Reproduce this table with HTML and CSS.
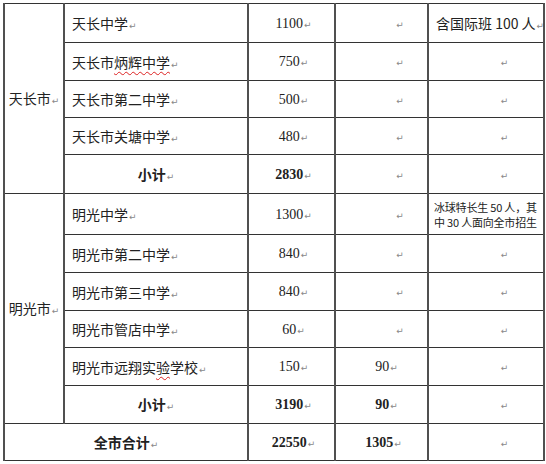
FILE: index.html
```html
<!DOCTYPE html>
<html lang="zh">
<head>
<meta charset="utf-8">
<link rel="stylesheet" href="styles.css">
</head>
<body>
<table class="grid">
  <colgroup>
    <col class="c1"><col class="c2"><col class="c3"><col class="c4"><col class="c5">
  </colgroup>
  <tr class="h39">
    <td class="city" rowspan="5">天长市<i class="pm">↵</i></td>
    <td class="name">天长中学<i class="pm">↵</i></td>
    <td class="num">1100<i class="pm">↵</i></td>
    <td class="empty"><i class="pm">↵</i></td>
    <td class="note">含国际班 100 人<i class="pm">↵</i></td>
  </tr>
  <tr class="h38">
    <td class="name">天长市<span class="spell">炳辉中学</span><i class="pm">↵</i></td>
    <td class="num">750<i class="pm">↵</i></td>
    <td class="empty"><i class="pm">↵</i></td>
    <td class="empty"><i class="pm">↵</i></td>
  </tr>
  <tr class="h37">
    <td class="name">天长市第二中学<i class="pm">↵</i></td>
    <td class="num">500<i class="pm">↵</i></td>
    <td class="empty"><i class="pm">↵</i></td>
    <td class="empty"><i class="pm">↵</i></td>
  </tr>
  <tr class="h37">
    <td class="name">天长市关塘中学<i class="pm">↵</i></td>
    <td class="num">480<i class="pm">↵</i></td>
    <td class="empty"><i class="pm">↵</i></td>
    <td class="empty"><i class="pm">↵</i></td>
  </tr>
  <tr class="h39">
    <td class="sub">小计<i class="pm">↵</i></td>
    <td class="num bold">2830<i class="pm">↵</i></td>
    <td class="empty"><i class="pm">↵</i></td>
    <td class="empty"><i class="pm">↵</i></td>
  </tr>
  <tr class="h41">
    <td class="city" rowspan="6">明光市<i class="pm">↵</i></td>
    <td class="name">明光中学<i class="pm">↵</i></td>
    <td class="num">1300<i class="pm">↵</i></td>
    <td class="empty"><i class="pm">↵</i></td>
    <td class="note small">冰球特长生 50 人，其<br>中 30 人面向全市招生</td>
  </tr>
  <tr class="h38">
    <td class="name">明光市第二中学<i class="pm">↵</i></td>
    <td class="num">840<i class="pm">↵</i></td>
    <td class="empty"><i class="pm">↵</i></td>
    <td class="empty"><i class="pm">↵</i></td>
  </tr>
  <tr class="h38">
    <td class="name">明光市第三中学<i class="pm">↵</i></td>
    <td class="num">840<i class="pm">↵</i></td>
    <td class="empty"><i class="pm">↵</i></td>
    <td class="empty"><i class="pm">↵</i></td>
  </tr>
  <tr class="h37">
    <td class="name">明光市管店中学<i class="pm">↵</i></td>
    <td class="num">60<i class="pm">↵</i></td>
    <td class="empty"><i class="pm">↵</i></td>
    <td class="empty"><i class="pm">↵</i></td>
  </tr>
  <tr class="h38">
    <td class="name">明光市远翔实<span class="spell">验</span>学校<i class="pm">↵</i></td>
    <td class="num">150<i class="pm">↵</i></td>
    <td class="num wide">90<i class="pm">↵</i></td>
    <td class="empty"><i class="pm">↵</i></td>
  </tr>
  <tr class="h38">
    <td class="sub">小计<i class="pm">↵</i></td>
    <td class="num bold">3190<i class="pm">↵</i></td>
    <td class="num bold wide">90<i class="pm">↵</i></td>
    <td class="empty"><i class="pm">↵</i></td>
  </tr>
  <tr class="h37">
    <td class="sub" colspan="2">全市合计<i class="pm">↵</i></td>
    <td class="num bold">22550<i class="pm">↵</i></td>
    <td class="num bold">1305<i class="pm">↵</i></td>
    <td class="empty"><i class="pm">↵</i></td>
  </tr>
</table>
</body>
</html>
```
FILE: styles.css
```css
html, body {
  margin: 0;
  padding: 0;
  background: #fff;
}
body {
  padding: 3px 0 0 3px;
  font-family: "Noto Sans CJK SC", "Liberation Sans", sans-serif;
  color: #222;
}
.grid {
  border-collapse: collapse;
  table-layout: fixed;
  width: 540px;
}
.c1 { width: 60px; }
.c2 { width: 184px; }
.c3 { width: 87px; }
.c4 { width: 93px; }
.c5 { width: 116px; }
.grid td {
  border-top: 1px solid #333;
  border-bottom: 1px solid #333;
  border-left: 2px solid #505050;
  border-right: 2px solid #505050;
  padding: 0;
  font-size: 14px;
  line-height: 16px;
  vertical-align: middle;
  white-space: nowrap;
  overflow: hidden;
}
.h37 { height: 37px; }
.h38 { height: 38px; }
.h39 { height: 39px; }
.h41 { height: 41px; }
.city {
  text-align: center;
  padding-top: 2px !important;
}
.name {
  padding-left: 7px !important;
  padding-top: 3px !important;
}
.sub {
  text-align: center;
  font-weight: bold;
  padding-top: 2px !important;
}
.num {
  text-align: center;
  font-family: "Liberation Serif", serif;
  font-size: 14px;
  padding-left: 4px !important;
  padding-top: 2px !important;
}
.num.wide {
  padding-left: 10px !important;
}
.bold { font-weight: bold; }
.empty {
  text-align: center;
  padding-left: 36px !important;
}
.note {
  padding-left: 7px !important;
  padding-top: 2px !important;
}
.note.small {
  font-size: 11px;
  line-height: 15px;
  letter-spacing: -0.2px;
  padding-left: 5px !important;
  padding-top: 1px !important;
}
.pm {
  font-style: normal;
  font-weight: normal;
  font-family: "DejaVu Sans", sans-serif;
  font-size: 9px;
  color: #888;
  margin-left: 1px;
}
.spell {
  text-decoration: underline wavy #d22;
  text-decoration-thickness: 1px;
  text-underline-offset: 3px;
}
```
